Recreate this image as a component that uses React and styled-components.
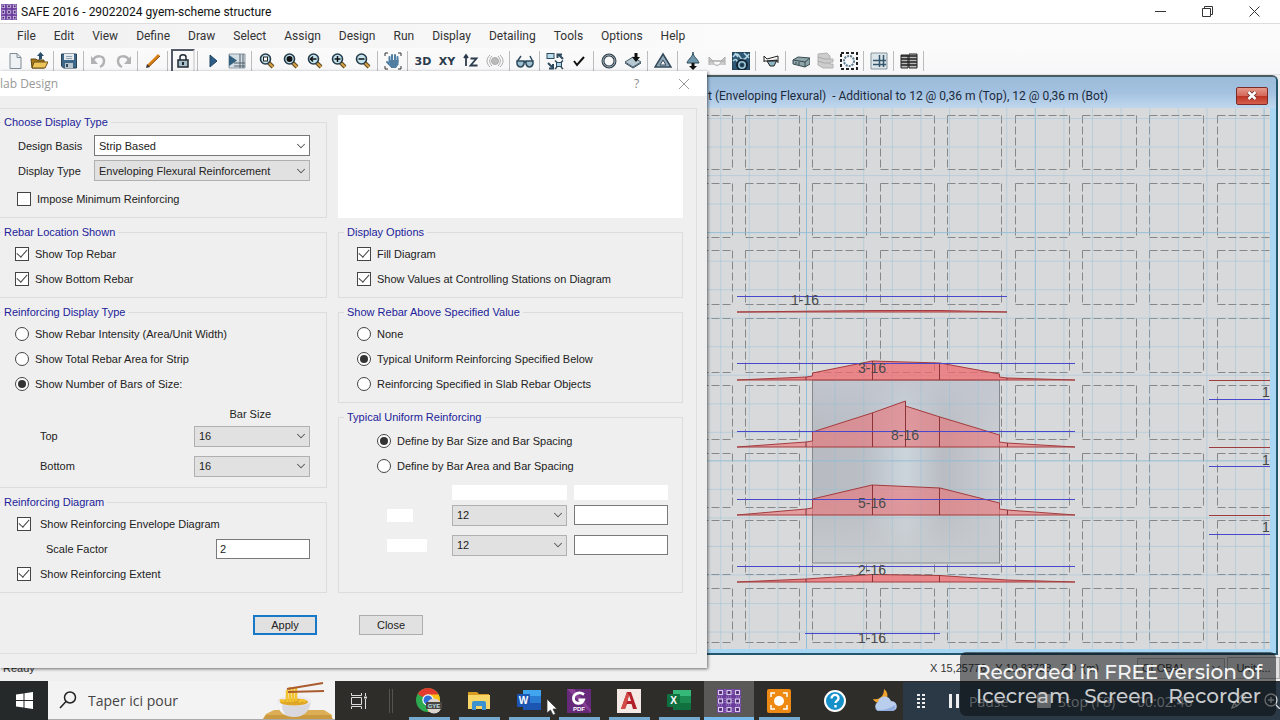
import React from 'react';
import styled, { createGlobalStyle } from 'styled-components';
import { ChevronDown } from 'lucide-react';

const GlobalStyle = createGlobalStyle`
  * {
    box-sizing: border-box;
  }

  body {
    margin: 0;
    overflow: hidden;
    font-family: Roboto, 'Open Sans', sans-serif;
    font-size: 12px;
    color: #222;
  }

  button, input, select {
    font: inherit;
    color: inherit;
    margin: 0;
  }
`;

const Desktop = styled.div`
  position: relative;
  display: flex;
  flex-direction: column;
  min-height: 100vh;
  background: #f0f0f0;
`;

/* ---------- main window chrome ---------- */

const TitleBar = styled.header`
  display: flex;
  align-items: center;
  gap: 4px;
  height: 24px;
  padding: 0 2px 0 1px;
  background: #fff;
  border-bottom: 1px solid #dcdcdc;
`;

const AppTitle = styled.h1`
  flex: 1;
  margin: 0;
  font-size: 12px;
  font-weight: 400;
  color: #111;
`;

const CaptionButtons = styled.div`
  display: flex;
`;

const CaptionButton = styled.button`
  display: grid;
  place-items: center;
  width: 47px;
  height: 22px;
  padding: 0;
  border: 0;
  background: none;
`;

const MenuBar = styled.nav`
  display: flex;
  align-items: center;
  height: 24px;
  padding-left: 8px;
  background: linear-gradient(to right, #f1f1f2, #fbfbfb 60%);
`;

const MenuItem = styled.button`
  padding: 0 9px;
  border: 0;
  background: none;
  line-height: 20px;
  color: #333;
`;

const ToolBar = styled.div`
  display: flex;
  align-items: center;
  height: 27px;
  padding-left: 3px;
  background: linear-gradient(#fbfbfb, #f6f6f8);
  border-bottom: 1px solid #e2e2e2;
`;

const Tool = styled.button`
  display: grid;
  place-items: center;
  width: 24px;
  height: 24px;
  padding: 0;
  border: ${props => props.$pressed ? '2px solid #555a68' : '0'};
  border-right-color: #ddd;
  border-bottom-color: #ddd;
  background: none;
  font: 700 11px 'DejaVu Sans', sans-serif;
  color: #2c3b4c;
`;

const ToolSeparator = styled.span`
  width: 2px;
  height: 20px;
  margin: 0 2px;
  border-left: 1px solid #bcbcc0;
`;

const Workspace = styled.main`
  flex: 1;
  display: flex;
  padding-right: 2px;
`;

const ModelWindow = styled.section`
  flex: 1;
  display: flex;
  flex-direction: column;
  border: 2px solid #23566b;
  border-top-color: #4b5b62;
  border-left: 0;
  border-top-right-radius: 6px;
  background: #a9d6f2;
`;

const ModelTitle = styled.div`
  display: flex;
  align-items: center;
  justify-content: space-between;
  height: 31px;
  padding: 6px 8px 0 708px;
  border-top-right-radius: 4px;
  background: linear-gradient(#9bbcda, #a3c1e0 50%, #c0d8ee);
  color: #1b2a3c;
  white-space: pre;
`;

const ModelClose = styled.button`
  display: grid;
  place-items: center;
  width: 32px;
  height: 18px;
  padding: 0;
  border: 1px solid #7c2c28;
  border-radius: 2px;
  background: linear-gradient(#e59a8a, #d4685a 48%, #bd3324 52%, #d4604c);
`;

const Canvas = styled.svg`
  flex: 1;
  width: calc(100% - 6px);
  margin-bottom: 4px;
  min-height: 0;
  background: #d8d9db;
`;

const StatusBar = styled.footer`
  display: flex;
  align-items: center;
  height: 26px;
  padding-left: 3px;
  background: #f0f0f1;
  font: 11px 'Liberation Sans', sans-serif;
  color: #333;
`;

const Coordinates = styled.span`
  margin-left: auto;
  margin-right: 38px;
  white-space: pre;
`;

const UnitsButton = styled.button`
  width: 53px;
  height: 22px;
  margin-left: 2px;
  padding: 0;
  border: 1px solid #adadad;
  background: #e1e1e1;
`;

/* ---------- form parts ---------- */

const SelectBox = styled.span`
  display: inline-grid;
  align-items: center;
  width: ${props => props.$width}px;

  select, svg {
    grid-area: 1 / 1;
  }

  select {
    width: 100%;
    height: 21px;
    padding: 0 20px 0 4px;
    appearance: none;
    border: 1px solid ${props => props.$white ? '#777' : '#b0b0b0'};
    border-radius: 0;
    background: ${props => props.$white ? '#fff' : '#e1e1e1'};
  }

  svg {
    justify-self: end;
    margin-right: 2px;
    color: #555;
    pointer-events: none;
  }
`;

const TextInput = styled.input`
  width: 94px;
  height: 20px;
  padding: 0 3px;
  border: 1px solid #7a7a7a;
  background: #fff;
`;

const Tick = styled.input`
  flex: none;
  display: grid;
  place-items: center;
  width: 14px;
  height: 14px;
  appearance: none;
  border: 1px solid #444;
  border-radius: ${props => props.type === 'radio' ? '50%' : '0'};
  background: #fff;

  &:checked::after {
    content: '';
    ${props => props.type === 'radio' ? `
      width: 8px;
      height: 8px;
      border-radius: 50%;
      background: #333;
    ` : `
      width: 9px;
      height: 5px;
      margin-bottom: 3px;
      border: solid #444;
      border-width: 0 0 1px 1px;
      transform: rotate(-48deg);
    `}
  }
`;

const TickLabel = styled.label`
  display: flex;
  align-items: center;
  gap: ${props => props.$wide ? 9 : 6}px;
  height: 25px;
  padding-left: ${props => props.$indent}px;
`;

const PushButton = styled.button`
  width: 64px;
  height: 20px;
  padding: 0;
  border: ${props => props.$primary ? '2px solid #1878c8' : '1px solid #adadad'};
  background: #e1e1e1;
`;

/* ---------- slab design dialog ---------- */

const Dialog = styled.section`
  position: absolute;
  top: 71px;
  left: 0;
  width: 707px;
  background: #efefef;
  box-shadow: 1px 1px 3px rgba(0, 0, 0, 0.55);
  font: 11px 'Liberation Sans', sans-serif;
`;

const DialogTitle = styled.header`
  display: flex;
  align-items: center;
  height: 25px;
  background: #fff;
  font: 12px 'Open Sans', sans-serif;
  color: #999;

  h2 {
    flex: 1;
    margin: 0;
    font: inherit;
  }

  button {
    color: #888;
  }
`;

const DialogPanel = styled.form`
  margin: 12px 10px 0 0;
  border: 1px solid #dfdfdf;
  border-left: 0;
`;

const Columns = styled.div`
  display: grid;
  grid-template-columns: 327px 345px;
  gap: 11px;
  padding-top: 6px;
`;

const Column = styled.div`
  display: flex;
  flex-direction: column;
  gap: 7px;
`;

const Preview = styled.div`
  height: 103px;
  background: #fff;
`;

const Group = styled.fieldset`
  flex: ${props => props.$grow ? 1 : 'none'};
  min-width: 0;
  margin: 0;
  padding: 2px 0 6px;
  border: 1px solid #dcdcdc;
  border-left-width: ${props => props.$open ? 0 : 1}px;

  legend {
    margin-left: ${props => props.$open ? 1 : 5}px;
    padding: 0 3px;
    line-height: 14px;
    color: #22229a;
  }
`;

const FieldRow = styled.div`
  display: flex;
  align-items: center;
  justify-content: space-between;
  height: ${props => props.$tall ? 30 : 25}px;
  padding-left: ${props => props.$indent}px;
  padding-right: 16px;
`;

const BarHeader = styled.div`
  display: flex;
  justify-content: flex-end;
  align-items: center;
  height: 25px;
  padding: 10px 55px 0 0;
`;

const Rows = styled.div`
  padding-top: ${props => props.$top}px;
`;

const SpacingGrid = styled.div`
  display: grid;
  grid-template-columns: 58px 115px 94px;
  grid-template-rows: 15px 22px 30px;
  gap: 4px 7px;
  align-items: center;
  padding: 7px 14px 0 48px;
`;

const Blank = styled.span`
  width: ${props => props.$width};
  height: ${props => props.$height}px;
  background: #fff;
`;

const ButtonRow = styled.div`
  display: flex;
  gap: 42px;
  padding: 22px 0 18px 253px;
`;

const DialogFoot = styled.div`
  height: 14px;
`;

/* ---------- task bar ---------- */

const TaskBar = styled.footer`
  display: flex;
  height: 39px;
  background: #2e2d2a;
`;

const StartButton = styled.button`
  display: grid;
  place-items: center;
  width: 48px;
  padding: 0;
  border: 0;
  background: #262929;
`;

const SearchBox = styled.label`
  display: flex;
  align-items: center;
  gap: 11px;
  width: 287px;
  padding-left: 11px;
  background: #f3f3f3;
  border-bottom: 1px solid #aaa;
  font: 14px 'Open Sans', sans-serif;

  input {
    flex: 1;
    min-width: 0;
    padding: 0;
    border: 0;
    background: none;
    color: #444;
  }

  input::placeholder {
    color: #444;
    opacity: 1;
  }
`;

const TaskView = styled.button`
  display: grid;
  place-items: center;
  width: 48px;
  padding: 0;
  border: 0;
  background: none;
`;

const TaskDivider = styled.span`
  width: 4px;
  height: 24px;
  margin: 8px 11px 0 6px;
  border: solid #55534f;
  border-width: 0 1px;
`;

const TaskApps = styled.div`
  display: flex;
  margin-right: 6px;
`;

const TaskApp = styled.button`
  display: grid;
  place-items: center;
  width: 50px;
  padding: 0;
  border: 0;
  background: ${props => props.$active
    ? 'linear-gradient(#76b9ed, #76b9ed) bottom / 100% 3px no-repeat #5a5958'
    : props.$open
      ? 'linear-gradient(#76a9d0, #76a9d0) bottom / 41px 3px no-repeat'
      : 'none'};
`;

const Recorder = styled.div`
  position: absolute;
  right: 0;
  bottom: 0;
  display: flex;
  align-items: center;
  width: 377px;
  height: 38px;
  padding-left: 14px;
  background: #2b3947;
  font: 14px 'Open Sans', sans-serif;
  color: #c4c9ce;
`;

const RecorderButton = styled.button`
  display: flex;
  align-items: center;
  gap: ${props => props.$gap || 0}px;
  margin-right: ${props => props.$after}px;
  padding: 0;
  border: 0;
  background: none;
`;

const RecorderTime = styled.span`
  flex: 1;
`;

const Watermark = styled.div`
  position: absolute;
  right: 4px;
  bottom: 4px;
  width: 316px;
  padding: 8px 15px 8px 16px;
  border-radius: 6px;
  background: rgba(10, 12, 14, 0.55);
  font: 500 20px/24px Montserrat, Inter, sans-serif;
`;

const WatermarkLine = styled.div`
  display: flex;
  justify-content: space-between;
  white-space: nowrap;
  color: ${props => props.$dim ? '#c9cbcd' : '#f4f4f4'};
`;

const Cursor = styled.svg`
  position: absolute;
  left: 546px;
  bottom: 4px;
`;

/* ---------- icons ---------- */

const Icon = ({ size = 18, children, ...rest }) => (
  <svg width={size} height={size} viewBox="0 0 18 18" fill="none" stroke="#2e4a5c" aria-hidden="true" {...rest}>
    {children}
  </svg>
);

const Lens = ({ children }) => (
  <Icon>
    <path d="M10 10l5 5" stroke="#5a4520" strokeWidth="4" />
    <path d="M10 10l5 5" stroke="#d9a441" strokeWidth="2" />
    <circle cx="7.500" cy="7" r="5" fill="#c4e4ee" stroke="#263b49" strokeWidth="1.600" />
    {children}
  </Icon>
);

const SafeIcon = ({ size }) => (
  <svg width={size} height={size} viewBox="0 0 24 24" aria-hidden="true">
    <rect width="24" height="24" fill="#6a3d9c" />
    {[0, 8.5, 17].map(y => [0, 8.5, 17].map(x => (
      <rect key={`${x}-${y}`} x={x + 1.5} y={y + 1.5} width="4" height="4" fill="#47246e" stroke="#d9c8ec" strokeWidth="1.200" />
    )))}
    <path d="M8 0v5M16 0v5M8 9v6M16 9v6M8 19v5M16 19v5M0 8h5M0 16h5M9 8h6M9 16h6M19 8h5M19 16h5" stroke="#a98bca" strokeDasharray="1 1" />
  </svg>
);

const tools = [
  ['New', <Icon><path d="M4 1.500h7l4 4v11H4z" fill="#eef2f4" stroke="#7d8c96" /><path d="M11 1.500v4h4" stroke="#7d8c96" /></Icon>],
  ['Open', <Icon><path d="M1 7h5l1 1h7v8H2z" fill="#a87918" stroke="#604612" /><path d="M4 10h14l-3 6H2z" fill="#edc45a" stroke="#6b4e15" /><path d="M9 8l3-1V4h2L10.500 0 7 4h2z" fill="#294d68" stroke="none" /></Icon>],
  null,
  ['Save', <Icon><path d="M1.500 2h15v14h-13l-2-2z" fill="#3f6787" stroke="#294357" /><path d="M4 2h10v6H4z" fill="#e4eaee" stroke="none" /><path d="M5 11h8v5H5z" fill="#b9c6cf" stroke="none" /><path d="M6 4.500h6M6 6.500h6" stroke="#92a4b0" /><path d="M7 12v3" strokeWidth="2" /></Icon>],
  null,
  ['Undo', <Icon><path d="M3 8c3-5 11-5 11 1 0 3-2 5-4 6" stroke="#b2b2b5" strokeWidth="2.500" /><path d="M1 4v8h7z" fill="#b2b2b5" stroke="none" /></Icon>],
  ['Redo', <Icon><path d="M15 8C12 3 4 3 4 9c0 3 2 5 4 6" stroke="#b2b2b5" strokeWidth="2.500" /><path d="M17 4v8h-7z" fill="#b2b2b5" stroke="none" /></Icon>],
  null,
  ['Draw', <Icon><path d="M4 14L15 3" stroke="#d98218" strokeWidth="3" /><path d="M5 14.500L16 4" stroke="#8c4b10" /><path d="M2 16l1-4 3 3z" fill="#333" stroke="none" /></Icon>],
  null,
  ['Lock', <Icon><rect x="4" y="8" width="10" height="7" fill="#a9bdc9" stroke="#202a33" strokeWidth="1.500" /><path d="M6 8V5c0-3 6-3 6 0v3" stroke="#202a33" strokeWidth="1.500" /><path d="M9 10v3" stroke="#202a33" strokeWidth="2" /></Icon>],
  null,
  ['Run', <Icon><path d="M6 3v12l7-6z" fill="#2c5d88" stroke="#23455f" /></Icon>],
  ['Run Detailing', <Icon><path d="M1 2h16v14H1z" fill="#d5dee3" stroke="#8d9ca6" /><path d="M12 2v14M6 11h11M15 2v14M6 14h11" stroke="#53616b" /><path d="M1 3v11l8-5.500z" fill="#315f7e" stroke="none" /></Icon>],
  null,
  ['Zoom Window', <Lens><rect x="5.500" y="5" width="4" height="4" fill="#fff" stroke="#222" /></Lens>],
  ['Zoom Full', <Lens><circle cx="7.500" cy="7" r="3" fill="#111" stroke="none" /></Lens>],
  ['Zoom Previous', <Lens><path d="M4.500 7h6M7 4.500L4.500 7 7 9.500" stroke="#111" strokeWidth="1.500" /></Lens>],
  ['Zoom In', <Lens><path d="M4.500 7h6M7.500 4v6" stroke="#111" strokeWidth="1.500" /></Lens>],
  ['Zoom Out', <Lens><path d="M4.500 7h6" stroke="#111" strokeWidth="1.500" /></Lens>],
  null,
  ['Pan', <Icon><path d="M1 4V1h3M14 1h3v3M1 14v3h3M14 17h3v-3" stroke="#333" /><path d="M5.500 5v5M8 3v7M11 3v7M13.500 5v5M3 10l4 4" stroke="#4f7ea2" strokeWidth="2" strokeLinecap="round" /><path d="M5 8h9.500v4.500L12 16H7z" fill="#4f7ea2" stroke="none" /></Icon>],
  null,
  ['3D View', '3D'],
  ['Plan View', 'XY'],
  ['Elevation View', <Icon><path d="M4 14V4M2 6l2-3 2 3" stroke="#2c3b4c" strokeWidth="1.800" /><path d="M8.500 6.500h6l-6 7h7" stroke="#2c3b4c" strokeWidth="1.800" /></Icon>],
  ['Rotate', <Icon><circle cx="9" cy="9" r="3.500" fill="#bbb" stroke="#aaa" /><path d="M4 3c-4 4-4 8 0 12M14 3c4 4 4 8 0 12M6 4c-3 3-3 7 0 10M12 4c3 3 3 7 0 10" stroke="#aaa" /></Icon>],
  null,
  ['View Options', <Icon><path d="M1.500 9L5 4M16.500 9L14 4" strokeWidth="1.500" /><path d="M1 9h7v3q-1 3-3.500 3T1 12zM10 9h7v3q-1 3-3.500 3T10 12z" fill="#9fc0d0" strokeWidth="1.500" /><path d="M8 10h2" strokeWidth="2" /></Icon>],
  null,
  ['Shrink', <Icon><rect x="1" y="1.500" width="7" height="5" fill="#b9dcec" /><path d="M17 7l-4-4M11.500 6V2.500H16M2 11l4 4M7 12v4.500H3" strokeWidth="2" /><rect x="10.500" y="10.500" width="5" height="4" fill="#a9cfe2" /><path d="M9 8.500l2 2M17 8.500l-2 2M9 17l2-2M17 17l-2-2" strokeWidth="1.500" /></Icon>],
  ['Check Model', <Icon><path d="M4 9l3 4 7-8" stroke="#111" strokeWidth="2" /></Icon>],
  null,
  ['Joint', <Icon><circle cx="9" cy="9" r="6" stroke="#333e47" strokeWidth="3" /><circle cx="9" cy="9" r="6" stroke="#9eb4c2" /></Icon>],
  ['Slab Load', <Icon><path d="M1 10l8-5 8 5-8 5z" fill="#b6c9d3" stroke="#4a5b66" /><path d="M1 11l8 5 8-5" /><path d="M12 1v5" stroke="#111" strokeWidth="3" /><path d="M8 5h8l-4 5z" fill="#111" stroke="none" /></Icon>],
  null,
  ['Deformed Shape', <Icon><path d="M9 2l8 13H1z" fill="#8fa9b7" stroke="#35495a" strokeWidth="1.500" /><path d="M9 8l3 5H6z" fill="#f4f4f4" stroke="#35495a" /></Icon>],
  null,
  ['Reactions', <Icon><path d="M9 0c0 5 5 7 6 11H3C4 7 9 5 9 0z" fill="#6f97ac" /><path d="M9 11v4" strokeWidth="3" stroke="#111" /><path d="M5 14h8l-4 4z" fill="#111" stroke="none" /></Icon>],
  ['Beam Forces', <Icon><path d="M1 13V5l4 4h8l4-4v8M1 9h16M4 9q5 9 10 0" fill="#ccc" stroke="#aaa" /></Icon>],
  ['Slab Forces', <Icon><path d="M0 0h18v18H0z" fill="#2c5876" stroke="#1e3548" /><path d="M1 5q4-6 7 0t9-3M1 9q4-4 5 3M12 1l5 5M3 1l3 4" stroke="#b8d7e4" strokeWidth="1.500" /><circle cx="10" cy="13" r="5" stroke="#122434" fill="#98c4d8" strokeWidth="2" /><circle cx="10" cy="13" r="2" fill="#163047" /></Icon>],
  null,
  ['Slab Design', <Icon><path d="M2 10V4l3 3 11-3v7" stroke="#222" /><path d="M5 9l10-1-3 6H8z" fill="#8fb4c4" stroke="#222" /><path d="M2 9h14" stroke="#222" /></Icon>],
  null,
  ['Beam Design', <Icon><path d="M1 8l5-3 12 1v6l-5 3-12-3z" fill="#90a5a9" stroke="#374b50" /><path d="M1 8l12 2v5M13 10l5-4M4 10v2M7 10v3" stroke="#374b50" /></Icon>],
  ['Punching', <Icon><path d="M2 2l9-1 3 3v3h3v3h-3v2h3v4H7l-5-3z" fill="#ccc" stroke="#b2b2b2" /><path d="M2 5l6 2h6M2 9l6 2h6" stroke="#aaa" /></Icon>],
  ['Detailing Area', <Icon><rect x="1" y="1" width="16" height="16" stroke="#222" strokeWidth="2" strokeDasharray="3 2" /><circle cx="9" cy="9" r="5" stroke="#5f7f91" strokeWidth="2" strokeDasharray="2 1" /></Icon>],
  null,
  ['Grid', <Icon><path d="M1 1h16v16H1z" fill="#dce5e9" stroke="#88959d" /><path d="M9.500 3v12M13.500 3v12M3 8.500h13M3 12.500h13" stroke="#33566e" strokeWidth="1.500" /></Icon>],
  null,
  ['Tables', <Icon><path d="M1 3h7v13H1zM9 2h8v14H9z" fill="#bbb" stroke="#222" /><path d="M1 4h16M1 7h16M1 10h16M1 13h16" stroke="#222" strokeWidth="1.500" /></Icon>],
  null,
];

const menus = ['File', 'Edit', 'View', 'Define', 'Draw', 'Select', 'Assign', 'Design', 'Run', 'Display', 'Detailing', 'Tools', 'Options', 'Help'];

/* ---------- model drawing ---------- */

const strips = [
  { label: '1-16', x: 805, y: 300, line: [737, 1007, 296], shape: 'M737 312L872 310.500H940L1007 312z', bars: '' },
  { label: '3-16', x: 872, y: 368, line: [737, 1075, 363], shape: 'M737 380L806 377L812.500 376V373L872 361L940 363L999.500 374V377L1007 378L1075 380z', bars: 'M806 377v3M872.500 361v19M939.500 363v17M1007 378v2' },
  { label: '8-16', x: 905, y: 435, line: [737, 1075, 431], shape: 'M737 447L806 442L812.500 441V432L872 413L905.500 401V406L940 417L999.500 435V442L1007 443L1075 447z', bars: 'M806 442v5M872.500 413v34M905.500 401v46M939.500 417v30M1007.500 443v4' },
  { label: '5-16', x: 872, y: 503, line: [737, 1075, 499], shape: 'M737 515L806 509L812.500 508V499L872 485L940 488L999.500 503V509L1007 510L1075 515z', bars: 'M806 509v6M872.500 485v30M939.500 488v27M1007.500 510v5' },
  { label: '2-16', x: 872, y: 570, line: [737, 1075, 566], shape: 'M737 582L806 579L872 574.500L940 575.500L1007 580L1075 582z', bars: 'M806 579v3M872.500 575v7M939.500 575v7' },
  { label: '1-16', x: 872, y: 638, line: [805, 940, 633] },
];

const sideStrips = [
  { red: 380, blue: 399, text: 392 },
  { red: 447, blue: 466, text: 460 },
  { red: 515, blue: 534, text: 527 },
];

const cellColumns = Array.from({ length: 9 }, (_, i) => Math.round(677.6 + i * 67.4));
const cellRows = Array.from({ length: 8 }, (_, i) => Math.round(115 + i * 67.5));

function ModelDrawing() {
  return (
    <Canvas role="img" aria-label="Slab design strips">
      <defs>
        <linearGradient id="shade">
          <stop offset="0" stopColor="#b8bbc1" />
          <stop offset="0.270" stopColor="#babec5" />
          <stop offset="0.500" stopColor="#ccd5dc" />
          <stop offset="0.700" stopColor="#b9bcc2" />
          <stop offset="1" stopColor="#cacdd2" />
        </linearGradient>
        <linearGradient id="fade" x2="0" y2="1">
          <stop offset="0" stopColor="#c2c6cf" stopOpacity="0.900" />
          <stop offset="0.300" stopColor="#c2c6cf" stopOpacity="0" />
          <stop offset="0.600" stopColor="#c4c8cc" stopOpacity="0" />
          <stop offset="1" stopColor="#c8cbce" />
        </linearGradient>
      </defs>
      <g transform="translate(0 -108)" fill="none">
        {cellRows.map(y => cellColumns.map(x => (
          <path key={`${x}-${y}`} d={`M${x + 0.5} ${y + 0.5}h54M${x + 0.5} ${y + 54.5}h54M${x + 0.5} ${y + 0.5}v54M${x + 54.5} ${y + 0.5}v54`} stroke="#868788" strokeDasharray="8 3" />
        )))}
        <rect x="812.500" y="380" width="187" height="183" fill="url(#shade)" />
        <rect x="812.500" y="380" width="187" height="183" fill="url(#fade)" stroke="#85888c" />
        {Array.from({ length: 21 }, (_, i) => (
          <line key={i} x1={720.7 + i * 28.6} x2={720.7 + i * 28.6} y1="108" y2="650" stroke="#8dbdd6" opacity={i % 8 === 3 ? 0.9 : 0.4} />
        ))}
        {Array.from({ length: 19 }, (_, i) => (
          <line key={i} x1="700" x2="1271" y1={118.5 + i * 28.53} y2={118.5 + i * 28.53} stroke="#8dbdd6" opacity={i % 8 === 4 ? 0.9 : 0.4} />
        ))}
        {strips.map((strip, i) => (
          <g key={i}>
            {strip.shape && <path d={strip.shape} fill="#ef6a6e" fillOpacity={i === 2 || i === 3 ? 0.55 : 0.75} stroke="#a33c3e" />}
            {strip.bars && <path d={strip.bars} stroke="#8d3338" />}
            <path d={`M${strip.line[0]} ${strip.line[2] + 0.5}H${strip.line[1]}`} stroke="#4848cf" />
            <text x={strip.x} y={strip.y + 5} textAnchor="middle" fontFamily="Liberation Sans, sans-serif" fontSize="14" fill="#4a4a4e">{strip.label}</text>
          </g>
        ))}
        {sideStrips.map(side => (
          <g key={side.red}>
            <path d={`M1209 ${side.red + 0.5}H1271`} stroke="#9c3c3c" />
            <path d={`M1209 ${side.blue + 0.5}H1271`} stroke="#4848cf" />
            <text x="1262" y={side.text + 5} fontFamily="Liberation Sans, sans-serif" fontSize="14" fill="#444">1</text>
          </g>
        ))}
      </g>
    </Canvas>
  );
}

/* ---------- dialog ---------- */

const Check = ({ label, ...rest }) => (
  <TickLabel {...rest}>
    <Tick type="checkbox" defaultChecked={!rest.$off} />
    {label}
  </TickLabel>
);

const Radio = ({ label, name, checked, ...rest }) => (
  <TickLabel {...rest}>
    <Tick type="radio" name={name} defaultChecked={checked} />
    {label}
  </TickLabel>
);

const Dropdown = ({ value, width, white, ...rest }) => (
  <SelectBox $width={width} $white={white}>
    <select defaultValue={value} {...rest}>
      <option>{value}</option>
    </select>
    <ChevronDown size={14} strokeWidth={1.8} />
  </SelectBox>
);

function SlabDesignDialog() {
  return (
    <Dialog role="dialog" aria-labelledby="slab-title">
      <DialogTitle>
        <h2 id="slab-title">lab Design</h2>
        <CaptionButton aria-label="Help"><span>?</span></CaptionButton>
        <CaptionButton aria-label="Close window">
          <svg width="12" height="12" viewBox="0 0 12 12"><path d="M1 1l10 10M11 1L1 11" stroke="#999" /></svg>
        </CaptionButton>
      </DialogTitle>
      <DialogPanel onSubmit={e => e.preventDefault()}>
        <Columns>
          <Column>
            <Group $open>
              <legend>Choose Display Type</legend>
              <Rows $top={2}>
                <FieldRow $indent={18}>
                  <label htmlFor="basis">Design Basis</label>
                  <Dropdown id="basis" value="Strip Based" width={216} white />
                </FieldRow>
                <FieldRow $indent={18}>
                  <label htmlFor="display">Display Type</label>
                  <Dropdown id="display" value="Enveloping Flexural Reinforcement" width={216} />
                </FieldRow>
              </Rows>
              <Rows $top={3}>
                <Check label="Impose Minimum Reinforcing" $indent={17} $off />
              </Rows>
            </Group>
            <Group $open>
              <legend>Rebar Location Shown</legend>
              <Check label="Show Top Rebar" $indent={15} />
              <Check label="Show Bottom Rebar" $indent={15} />
            </Group>
            <Group $open>
              <legend>Reinforcing Display Type</legend>
              <Radio name="reinf" label="Show Rebar Intensity (Area/Unit Width)" $indent={15} />
              <Radio name="reinf" label="Show Total Rebar Area for Strip" $indent={15} />
              <Radio name="reinf" label="Show Number of Bars of Size:" $indent={15} checked />
              <BarHeader>Bar Size</BarHeader>
              <FieldRow $indent={40} $tall>
                <label htmlFor="top-size">Top</label>
                <Dropdown id="top-size" value="16" width={116} />
              </FieldRow>
              <FieldRow $indent={40} $tall>
                <label htmlFor="bottom-size">Bottom</label>
                <Dropdown id="bottom-size" value="16" width={116} />
              </FieldRow>
            </Group>
            <Group $open $grow>
              <legend>Reinforcing Diagram</legend>
              <Check label="Show Reinforcing Envelope Diagram" $indent={17} $wide />
              <FieldRow $indent={46}>
                <label htmlFor="scale">Scale Factor</label>
                <TextInput id="scale" defaultValue="2" />
              </FieldRow>
              <Check label="Show Reinforcing Extent" $indent={17} $wide />
            </Group>
          </Column>
          <Column>
            <Preview />
            <Group>
              <legend>Display Options</legend>
              <Check label="Fill Diagram" $indent={18} />
              <Check label="Show Values at Controlling Stations on Diagram" $indent={18} />
            </Group>
            <Group>
              <legend>Show Rebar Above Specified Value</legend>
              <Radio name="above" label="None" $indent={18} />
              <Radio name="above" label="Typical Uniform Reinforcing Specified Below" $indent={18} checked />
              <Radio name="above" label="Reinforcing Specified in Slab Rebar Objects" $indent={18} />
            </Group>
            <Group $grow>
              <legend>Typical Uniform Reinforcing</legend>
              <Rows $top={2}>
                <Radio name="typical" label="Define by Bar Size and Bar Spacing" $indent={38} checked />
                <Radio name="typical" label="Define by Bar Area and Bar Spacing" $indent={38} />
              </Rows>
              <SpacingGrid>
                <span />
                <Blank $width="100%" $height={15} />
                <Blank $width="100%" $height={15} />
                <Blank $width="26px" $height={13} />
                <Dropdown aria-label="Top bar size" value="12" width={115} />
                <TextInput aria-label="Top bar spacing" />
                <Blank $width="40px" $height={13} />
                <Dropdown aria-label="Bottom bar size" value="12" width={115} />
                <TextInput aria-label="Bottom bar spacing" />
              </SpacingGrid>
            </Group>
          </Column>
        </Columns>
        <ButtonRow>
          <PushButton $primary>Apply</PushButton>
          <PushButton type="button">Close</PushButton>
        </ButtonRow>
      </DialogPanel>
      <DialogFoot />
    </Dialog>
  );
}

/* ---------- task bar artwork ---------- */

const NoodleBowl = () => (
  <svg width="72" height="38" viewBox="0 0 72 38" aria-hidden="true">
    <path d="M0 38l3-5 8-4h50l8 5v4z" fill="#dcae55" />
    <path d="M0 38l3-4h64l3 4z" fill="#c99a40" />
    <path d="M14 20c1 11 7 16 17 16s16-6 17-16z" fill="#d9d8de" />
    <path d="M14 20c1 9 4 12 9 14-4-4-4-9-4-12z" fill="#f4f3f6" />
    <ellipse cx="31" cy="20" rx="17" ry="5" fill="#eceaf0" />
    <ellipse cx="31" cy="21" rx="14" ry="3.500" fill="#dfa526" />
    <path d="M24 21V9M27 21V6M30 21V8M33 20V7M21 21q-2-3-4-1M36 21q4-4 6 0" fill="none" stroke="#f2c32e" strokeWidth="2.500" />
    <path d="M24 8L60 2M25 11l36-1" stroke="#a95c2e" strokeWidth="2" />
  </svg>
);

const ChromeIcon = () => (
  <svg width="26" height="26" viewBox="0 0 26 26" aria-hidden="true">
    <circle cx="12" cy="12" r="12" fill="#2da94f" />
    <path d="M12 12L1.600 6A12 12 0 0 1 22.400 6z" fill="#e33b2e" />
    <path d="M12 6.500h10.700A12 12 0 0 1 12 24l5-9z" fill="#fbc116" />
    <circle cx="12" cy="12" r="5.700" fill="#fff" />
    <circle cx="12" cy="12" r="4.500" fill="#2f70d8" />
    <circle cx="18" cy="18" r="7.500" fill="#dcd5cf" />
    <rect x="10" y="14" width="16" height="7" rx="1" fill="#4a4441" />
    <text x="18" y="20" textAnchor="middle" fontFamily="Liberation Sans, sans-serif" fontSize="6" fontWeight="700" fill="#bfe2ec">GYE</text>
  </svg>
);

const FolderIcon = () => (
  <svg width="24" height="24" viewBox="0 0 24 24" aria-hidden="true">
    <path d="M1 3h9l2 2h10v6H1z" fill="#d99a22" />
    <path d="M1 6h22v14H1z" fill="#f8d567" />
    <path d="M5 21v-7q0-2 2-2h10q2 0 2 2v7h-4v-4H9v4z" fill="#3c91cf" />
  </svg>
);

const OfficeIcon = ({ letter, dark, mid, light }) => (
  <svg width="26" height="24" viewBox="0 0 26 24" aria-hidden="true">
    <path d="M7 1h18v20H7z" fill={mid} />
    <path d="M7 1h18v6H7z" fill={light} />
    <path d="M7 14h18v7H7z" fill={dark} />
    <rect x="1" y="5" width="13" height="13" rx="1" fill={dark} />
    <text x="7.500" y="15" textAnchor="middle" fontFamily="Liberation Sans, sans-serif" fontSize="10" fontWeight="700" fill="#fff">{letter}</text>
  </svg>
);

const FoxitIcon = () => (
  <svg width="24" height="24" viewBox="0 0 24 24" aria-hidden="true">
    <rect width="24" height="24" fill="#67297a" />
    <path d="M0 0h7L24 21v3z" fill="#8a3f96" />
    <path d="M17 5.500C12 2 6 5 6.500 10c.5 5 8 6 10 1h-5" fill="none" stroke="#fff" strokeWidth="2.800" />
    <text x="12" y="22" textAnchor="middle" fontFamily="Liberation Sans, sans-serif" fontSize="6" fontWeight="700" fill="#fff">PDF</text>
  </svg>
);

const AutocadIcon = () => (
  <svg width="24" height="24" viewBox="0 0 24 24" aria-hidden="true">
    <rect width="24" height="24" fill="#f4e9e4" />
    <path d="M4 20l6-17h4l6 17h-4l-1.500-5H10l-2 5zM10.500 12h3.500l-2-6z" fill="#b3202a" fillRule="evenodd" />
    <path d="M4 20l6-17 2 3-4 14z" fill="#d34a48" />
  </svg>
);

const RecordIcon = () => (
  <svg width="24" height="24" viewBox="0 0 24 24" aria-hidden="true">
    <rect width="24" height="24" rx="2" fill="#ee8a14" />
    <circle cx="12" cy="12" r="5" fill="#fff" />
    <path d="M4 8V4h4M16 4h4v4M20 16v4h-4M8 20H4v-4" fill="none" stroke="#fff" strokeWidth="1.500" />
  </svg>
);

const HelpIcon = () => (
  <svg width="22" height="22" viewBox="0 0 22 22" aria-hidden="true">
    <circle cx="11" cy="11" r="10" fill="#1690c9" stroke="#fff" strokeWidth="2" />
    <path d="M7.500 8.500c0-5 7.500-4.500 7 0-.2 2-3 2.200-3 4.500M11.500 15v2.500" fill="none" stroke="#fff" strokeWidth="2.300" />
  </svg>
);

const WeatherIcon = () => (
  <svg width="26" height="24" viewBox="0 0 26 24" aria-hidden="true">
    <path d="M12 0c6 4 4 13-4 14-4 0-6-2-7-4 7 1 11-3 11-10z" fill="#f0a32c" />
    <path d="M6 22a5 5 0 0 1 0-9c1-6 10-8 13-1 7 0 8 10 1 10z" fill="#b9cdec" />
    <path d="M3 20c5 2 13 1 20-4 1 4-1 6-3 6H6z" fill="#92aee0" />
  </svg>
);

const apps = [
  { name: 'Chrome', icon: <ChromeIcon />, open: true },
  { name: 'Explorer', icon: <FolderIcon />, open: true },
  { name: 'Word', icon: <OfficeIcon letter="W" dark="#1d55b2" mid="#2b7cd3" light="#41a5ee" />, open: true },
  { name: 'Foxit PDF', icon: <FoxitIcon />, open: true },
  { name: 'AutoCAD', icon: <AutocadIcon />, open: true },
  { name: 'Excel', icon: <OfficeIcon letter="X" dark="#107040" mid="#1b8d52" light="#35b878" />, open: true },
  { name: 'SAFE', icon: <SafeIcon size={24} />, active: true },
  { name: 'Screen Recorder', icon: <RecordIcon />, open: true },
];

function App() {
  return (
    <Desktop>
      <GlobalStyle />
      <TitleBar>
        <SafeIcon size={16} />
        <AppTitle>SAFE 2016 - 29022024 gyem-scheme structure</AppTitle>
        <CaptionButtons>
          <CaptionButton aria-label="Minimize">
            <svg width="11" height="11" viewBox="0 0 11 11"><path d="M0 5.500h11" stroke="#333" /></svg>
          </CaptionButton>
          <CaptionButton aria-label="Restore">
            <svg width="11" height="11" viewBox="0 0 11 11" fill="none" stroke="#333"><path d="M.5 2.500h8v8h-8zM2.500 2.500v-2h8v8h-2" /></svg>
          </CaptionButton>
          <CaptionButton aria-label="Close">
            <svg width="11" height="11" viewBox="0 0 11 11"><path d="M.5.500l10 10M10.500.500l-10 10" stroke="#333" /></svg>
          </CaptionButton>
        </CaptionButtons>
      </TitleBar>
      <MenuBar>
        {menus.map(menu => <MenuItem key={menu}>{menu}</MenuItem>)}
      </MenuBar>
      <ToolBar>
        {tools.map((tool, i) => tool
          ? <Tool key={i} aria-label={tool[0]} $pressed={tool[0] === 'Lock'}>{tool[1]}</Tool>
          : <ToolSeparator key={i} />)}
      </ToolBar>
      <Workspace>
        <ModelWindow>
          <ModelTitle>
            <span>{'t (Enveloping Flexural)  - Additional to 12 @ 0,36 m (Top), 12 @ 0,36 m (Bot)'}</span>
            <ModelClose aria-label="Close model window">
              <svg width="10" height="9" viewBox="0 0 10 9"><path d="M1.500 1l7 7M8.500 1l-7 7" stroke="#5e2b28" strokeWidth="4" /><path d="M1.500 1l7 7M8.500 1l-7 7" stroke="#fff" strokeWidth="2.500" /></svg>
            </ModelClose>
          </ModelTitle>
          <ModelDrawing />
        </ModelWindow>
      </Workspace>
      <StatusBar>
        <span>Ready</span>
        <Coordinates>{'X 15,25776   Y 10,83728   Z 0  (m)'}</Coordinates>
        <Dropdown aria-label="Coordinate system" value="GLOBAL" width={88} />
        <UnitsButton>Units...</UnitsButton>
      </StatusBar>
      <TaskBar>
        <StartButton aria-label="Start">
          <svg width="17" height="17" viewBox="0 0 17 17" fill="#fff"><path d="M0 2.500l7.500-1V8H0zM8.500 1.300L17 0v8H8.500zM0 9h7.500v6.500l-7.500-1zM8.500 9H17v8l-8.500-1.300z" /></svg>
        </StartButton>
        <SearchBox>
          <svg width="18" height="18" viewBox="0 0 18 18" fill="none" stroke="#222" strokeWidth="1.500" aria-hidden="true"><circle cx="11" cy="6.500" r="5.500" /><path d="M7 10.500L1 17" /></svg>
          <input placeholder="Taper ici pour" aria-label="Search" />
          <NoodleBowl />
        </SearchBox>
        <TaskView aria-label="Task view">
          <svg width="17" height="16" viewBox="0 0 17 16" fill="none" stroke="#ddd"><path d="M.5 0v2.500h10V0M.5 4.500h10v7H.5zM.5 16v-2.500h10V16M14.500 0v3M14.500 6v10" /><path d="M13 4.500h3" strokeWidth="2" /></svg>
        </TaskView>
        <TaskDivider />
        <TaskApps>
          {apps.map(app => (
            <TaskApp key={app.name} aria-label={app.name} $open={app.open} $active={app.active}>{app.icon}</TaskApp>
          ))}
        </TaskApps>
        <TaskApp aria-label="Get help"><HelpIcon /></TaskApp>
        <TaskApp aria-label="Weather"><WeatherIcon /></TaskApp>
      </TaskBar>
      <SlabDesignDialog />
      <Recorder>
        <RecorderButton aria-label="Move" $after={24}>
          <svg width="8" height="14" viewBox="0 0 8 14" fill="#eee"><path d="M0 0h3v2H0zM5 0h3v2H5zM0 4h3v2H0zM5 4h3v2H5zM0 8h3v2H0zM5 8h3v2H5zM0 12h3v2H0zM5 12h3v2H5z" /></svg>
        </RecorderButton>
        <RecorderButton $gap={10} $after={29}>
          <svg width="10" height="14" viewBox="0 0 10 14" fill="#eee"><path d="M0 0h3v14H0zM7 0h3v14H7z" /></svg>
          Pause
        </RecorderButton>
        <RecorderButton $gap={7} $after={22}>
          <svg width="14" height="14" viewBox="0 0 14 14"><rect width="14" height="14" rx="1" fill="#ccd0d3" /></svg>
          Stop (F8)
        </RecorderButton>
        <RecorderTime>00:02:46</RecorderTime>
        <RecorderButton aria-label="Draw" $after={17}>
          <svg width="16" height="16" viewBox="0 0 16 16" fill="none" stroke="#ddd" strokeWidth="1.300"><path d="M1 15l2-5 9-9 3 3-9 9zM3 10l3 3" /></svg>
        </RecorderButton>
        <RecorderButton aria-label="Zoom" $after={0}>
          <svg width="16" height="16" viewBox="0 0 16 16" fill="none" stroke="#ddd" strokeWidth="1.300"><circle cx="7" cy="7" r="6" /><path d="M4 7h6M7 4v6M11 11l5 5" /></svg>
        </RecorderButton>
      </Recorder>
      <Watermark>
        <WatermarkLine>Recorded in FREE version of</WatermarkLine>
        <WatermarkLine $dim><span>Icecream</span><span>Screen</span><span>Recorder</span></WatermarkLine>
      </Watermark>
      <Cursor width="12" height="18" viewBox="0 0 12 18" aria-hidden="true">
        <path d="M1 1v14l3.500-3 2.500 5 2.500-1-2.500-5H11z" fill="#fff" stroke="#333" strokeWidth=".7" />
      </Cursor>
    </Desktop>
  );
}

export default App;
